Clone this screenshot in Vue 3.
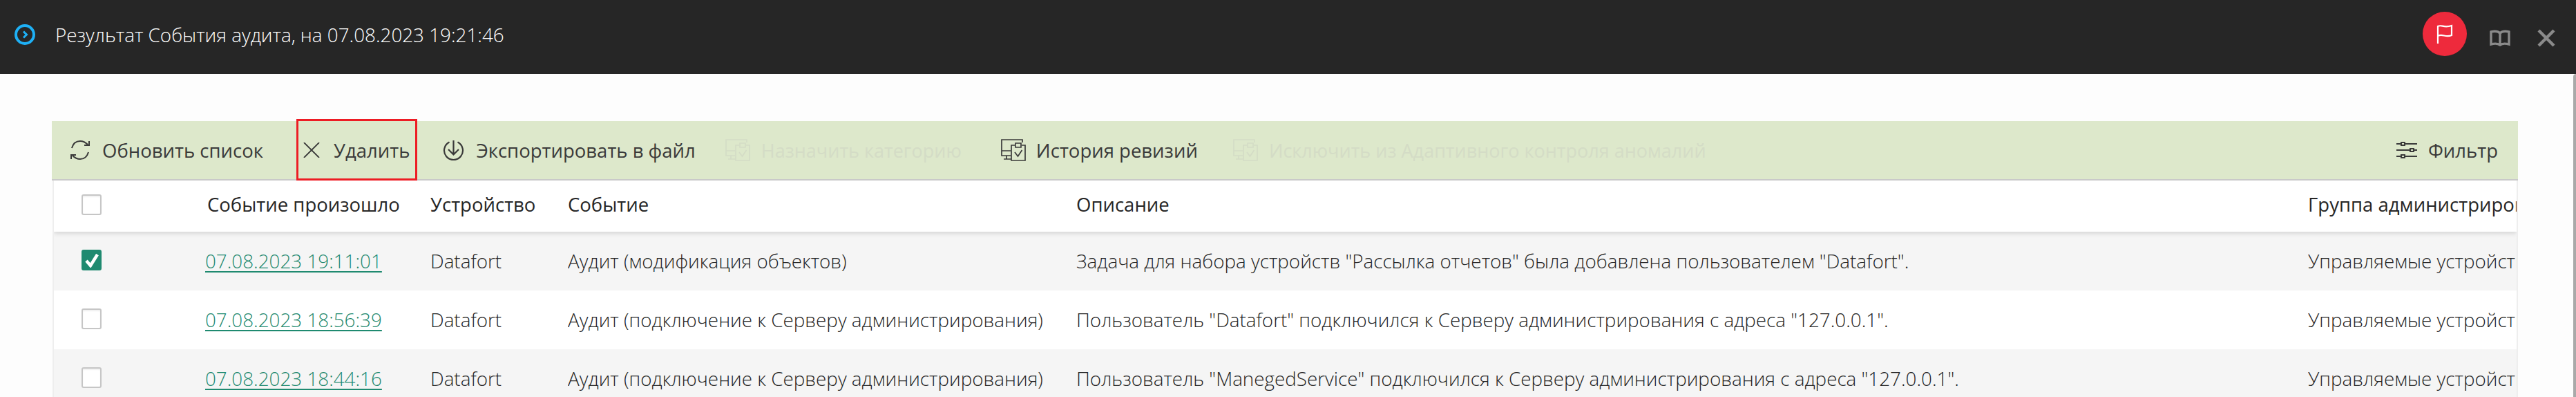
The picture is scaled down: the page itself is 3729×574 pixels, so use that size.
<script setup>
const columns = ['Событие произошло', 'Устройство', 'Событие', 'Описание', 'Группа администрирования']

const rows = [
  {
    date: '07.08.2023 19:11:01',
    event: 'Аудит (модификация объектов)',
    text: 'Задача для набора устройств "Рассылка отчетов" была добавлена пользователем "Datafort".',
    checked: true
  },
  {
    date: '07.08.2023 18:56:39',
    event: 'Аудит (подключение к Серверу администрирования)',
    text: 'Пользователь "Datafort" подключился к Серверу администрирования с адреса "127.0.0.1".',
    checked: false
  },
  {
    date: '07.08.2023 18:44:16',
    event: 'Аудит (подключение к Серверу администрирования)',
    text: 'Пользователь "ManegedService" подключился к Серверу администрирования с адреса "127.0.0.1".',
    checked: false
  }
]
</script>

<template>
  <div class="page">
    <header class="topbar">
      <svg class="info-icon" viewBox="0 0 30 30" fill="none">
        <circle cx="15" cy="15" r="13" stroke="#1eb0f5" stroke-width="4" />
        <path d="M13 10.5l4.5 4.5-4.5 4.5" stroke="#1eb0f5" stroke-width="3" />
      </svg>
      <span class="title">Результат События аудита, на 07.08.2023 19:21:46</span>
      <div class="top-actions">
        <button class="flag-btn">
          <svg width="26" height="30" viewBox="0 0 26 30" fill="none" stroke="#fff" stroke-width="2.2">
            <path d="M3 29V4c6-3 8 3 20-1v14c-9 4-13-3-20 1" />
          </svg>
        </button>
        <svg class="book" width="30" height="24" viewBox="0 0 30 24" fill="none" stroke="#8a8a8a" stroke-width="3.4">
          <path d="M15 5C12 2 6 2 2 3v18c4-1 10-1 13 1 3-2 9-2 13-1V3c-4-1-10-1-13 2zM15 5v17" />
        </svg>
        <svg class="close" width="26" height="26" viewBox="0 0 26 26" fill="none" stroke="#8a8a8a" stroke-width="4.4">
          <path d="M2 2l22 22M24 2L2 24" />
        </svg>
      </div>
    </header>

    <main class="content">
      <div class="panel">
        <div class="toolbar">
          <button class="tool refresh">
            <svg width="28" height="28" viewBox="0 0 28 28" fill="none" stroke="#3a3a3a" stroke-width="2">
              <path d="M2 11C4 4 9 1 14 1c4 0 8 2 11 5M27 1v6h-7M26 17c-2 7-7 10-12 10-4 0-8-2-11-5M1 27v-6h7" />
            </svg>
            <span>Обновить список</span>
          </button>
          <button class="tool remove">
            <svg width="24" height="22" viewBox="0 0 24 22" fill="none" stroke="#3a3a3a" stroke-width="1.8">
              <path d="M1 0l22 22M23 0L1 22" />
            </svg>
            <span>Удалить</span>
          </button>
          <button class="tool export">
            <svg width="31" height="30" viewBox="0 0 31 30" fill="none" stroke="#3a3a3a" stroke-width="2.2">
              <path d="M9.5 3.5a13.5 13.5 0 1 0 12 0M15.500 1v20M8 14l7.500 7.500L23 14" />
            </svg>
            <span>Экспортировать в файл</span>
          </button>
          <button class="tool assign disabled">
            <svg class="device" width="36" height="32" viewBox="0 0 36 32" fill="none" stroke="currentColor" stroke-width="1.7">
              <path d="M31 5V1H1v23h13M1 17h13M8 24v5M4 29h11" />
              <path d="M20 9h-5v22h20V9h-5M21 6h8v6h-8zM20 19l4.500 6 6-9" />
            </svg>
            <span>Назначить категорию</span>
          </button>
          <button class="tool history">
            <svg class="device" width="36" height="32" viewBox="0 0 36 32" fill="none" stroke="currentColor" stroke-width="1.7">
              <path d="M31 5V1H1v23h13M1 17h13M8 24v5M4 29h11" />
              <path d="M20 9h-5v22h20V9h-5M21 6h8v6h-8zM20 19l4.500 6 6-9" />
            </svg>
            <span>История ревизий</span>
          </button>
          <button class="tool exclude disabled">
            <svg class="device" width="36" height="32" viewBox="0 0 36 32" fill="none" stroke="currentColor" stroke-width="1.7">
              <path d="M31 5V1H1v23h13M1 17h13M8 24v5M4 29h11" />
              <path d="M20 9h-5v22h20V9h-5M21 6h8v6h-8zM20 19l4.500 6 6-9" />
            </svg>
            <span>Исключить из Адаптивного контроля аномалий</span>
          </button>
          <button class="tool filter">
            <svg width="30" height="24" viewBox="0 0 30 24" fill="none" stroke="#3a3a3a" stroke-width="2">
              <path d="M0 3h6M13 3h17M0 12h19M26 12h4M0 21h6M13 21h17" />
              <rect x="7" y="1" width="5" height="4" />
              <rect x="20" y="10" width="5" height="4" />
              <rect x="7" y="19" width="5" height="4" />
            </svg>
            <span>Фильтр</span>
          </button>
        </div>

        <div class="table">
          <div class="row head">
            <div class="cell check-cell"><span class="checkbox"></span></div>
            <div v-for="col in columns" :key="col" class="cell">{{ col }}</div>
          </div>
          <div v-for="row in rows" :key="row.date" class="row body-row">
            <div class="cell check-cell">
              <span class="checkbox" :class="{ checked: row.checked }">
                <svg v-if="row.checked" width="20" height="22" viewBox="0 0 20 22" fill="none" stroke="#fff" stroke-width="4.500">
                  <path d="M2 12l6 7L18 3" />
                </svg>
              </span>
            </div>
            <div class="cell"><a class="date" href="#">{{ row.date }}</a></div>
            <div class="cell">Datafort</div>
            <div class="cell">{{ row.event }}</div>
            <div class="cell">{{ row.text }}</div>
            <div class="cell">Управляемые устройства</div>
          </div>
        </div>
      </div>
      <div class="scrollbar"></div>
    </main>
  </div>
</template>

<style scoped>
.page {
  width: 3729px;
  height: 574px;
  overflow: hidden;
  display: flex;
  flex-direction: column;
  background: #fdfdfd;
  font-family: "Open Sans", "Noto Sans", sans-serif;
  font-size: 27.5px;
  color: #262626;
}

.topbar {
  flex: 0 0 107px;
  box-sizing: border-box;
  display: flex;
  align-items: center;
  background: #262626;
  color: #fff;
  padding: 0 30px 7px 21px;
}
.info-icon {
  width: 30px;
  height: 30px;
  margin-right: 29px;
}
.title {
  font-size: 27.8px;
  font-weight: 300;
}
.top-actions {
  margin-left: auto;
  display: flex;
  align-items: center;
}
.flag-btn {
  width: 64px;
  height: 64px;
  border: none;
  border-radius: 50%;
  background: #ee2a3c;
  display: flex;
  align-items: center;
  justify-content: center;
  padding: 0;
  margin: 0 33px 3px 0;
}
.book {
  margin: 9px 39px 0 0;
}
.close {
  margin-top: 9px;
}

.content {
  flex: 1;
  display: flex;
  min-height: 0;
  position: relative;
}
.panel {
  margin: 68px 0 0 75px;
  width: 3570px;
}
.scrollbar {
  position: absolute;
  right: 0;
  top: 0;
  width: 4px;
  height: 100%;
  border-radius: 4px 0 0 0;
  background: #a9a9a9;
}

.toolbar {
  height: 84px;
  display: flex;
  align-items: center;
  background: #dde8cb;
  border-bottom: 2px solid #c9c9c9;
  padding-left: 27px;
}
.tool {
  display: flex;
  align-items: center;
  height: 100%;
  gap: 18px;
  padding: 0;
  border: none;
  background: none;
  font: inherit;
  color: #3a3a3a;
  white-space: nowrap;
}
.tool.disabled {
  color: #d4dcc6;
  font-size: 27px;
}
.tool .device {
  color: inherit;
  flex: none;
}
.refresh { margin-right: 58px; }
.remove { position: relative; margin-right: 48px; gap: 20px; }
.remove::after {
  content: "";
  position: absolute;
  left: -10px;
  top: -3px;
  width: 175px;
  height: 89px;
  box-sizing: border-box;
  border: 3px solid #ed1c24;
}
.export { margin-right: 43px; gap: 17px; }
.assign { margin-right: 57px; gap: 16px; }
.history { margin-right: 51px; gap: 15px; }
.exclude { gap: 16px; }
.filter { margin-left: auto; margin-right: 29px; gap: 16px; }

.table {
  border-left: 2px solid #eeeeee;
  border-right: 2px solid #eeeeee;
  background: #fff;
  margin-left: 1px;
  overflow: hidden;
}
.row {
  display: grid;
  grid-template-columns: 219px 326px 199px 736px 1783px 1fr;
  align-items: center;
  white-space: nowrap;
}
.cell {
  overflow: hidden;
  padding-bottom: 2px;
}
.head {
  height: 74px;
  padding-bottom: 4px;
  box-sizing: border-box;
  position: relative;
  box-shadow: 0 3px 6px rgba(0, 0, 0, 0.12);
}
.head .cell:nth-child(2) {
  padding-left: 3px;
}
.body-row {
  height: 85px;
  font-size: 27.8px;
  font-weight: 300;
}
.body-row:nth-child(even) {
  background: #f5f5f5;
}
.check-cell {
  padding-left: 40px;
  padding-bottom: 0;
  display: flex;
  align-items: center;
}
.body-row .check-cell {
  padding-bottom: 3px;
}
.checkbox {
  width: 29px;
  height: 30px;
  box-sizing: border-box;
  border: 2px solid #c6c6c6;
  border-radius: 3px;
  background: #fff;
  box-shadow: inset 0 2px 2px rgba(0, 0, 0, 0.06);
  display: flex;
  align-items: center;
  justify-content: center;
}
.checkbox.checked {
  background: #1f8a70;
  border-color: #1f8a70;
  box-shadow: none;
}
.date {
  color: #1f8a70;
  text-decoration: underline;
  text-underline-offset: 4px;
}
</style>

<style>
html, body {
  margin: 0;
  overflow: hidden;
}
</style>
